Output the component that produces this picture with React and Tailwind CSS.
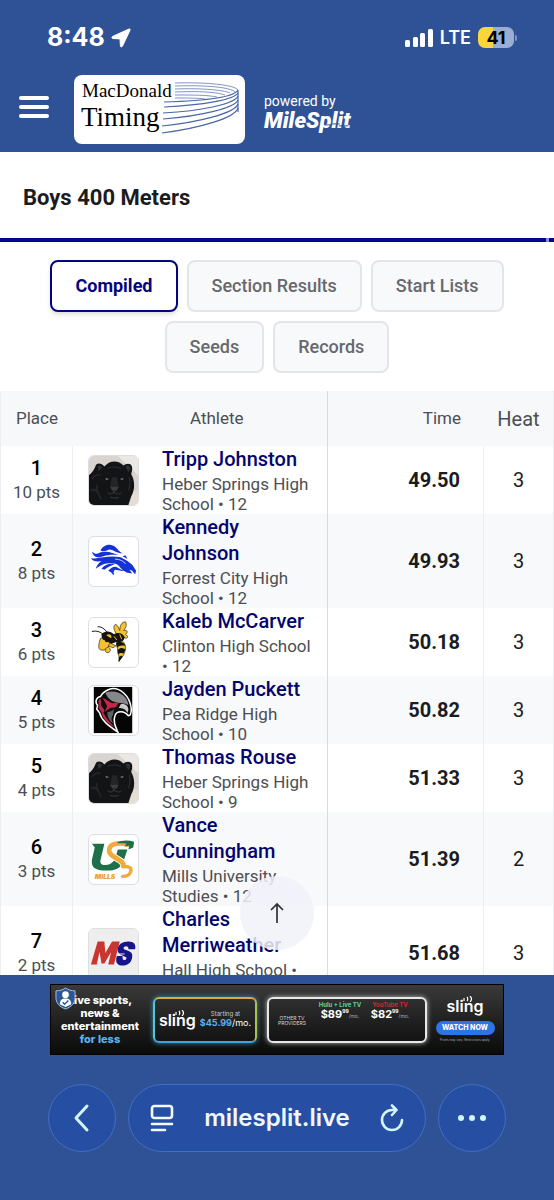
import React, { useState } from 'react';

const Panther = () => (
    <svg viewBox="0 0 51 51" className="w-full h-full">
        <rect width="51" height="51" fill="#d9d4cf" />
        <path d="M30 0h21v20l-8-8z" fill="#ebe8e3" />
        <path d="M44 34l7 4v13H40z" fill="#e6ddd2" />
        <path d="M0 20C4 17 6 13 7 10c1-3 6-3 9 1 5-7 15-7 20-1 3-3 9-3 9 3 0 3-1 4-1 6 4 7 4 16 0 23l-3 9H0z" fill="#131416" />
        <path d="M9 11c1-2 4-1 5 1l-4 4zM38 11c2-2 5-1 5 2l-2 4z" fill="#2f3034" />
        <path d="M3 24c3-4 6-5 9-4M2 36c3-2 5-1 7 2M19 13c3-2 10-2 14 0M42 22c1 5 1 9-1 14M8 30c0 6 2 11 5 15" stroke="#26282b" strokeWidth="1.5" fill="none" />
        <path d="M17 23l4 1-3 1zM36 23l-4 1 3 1z" fill="#8d876f" />
        <path d="M24 22l-2 10h9l-2-10z" fill="#232527" />
        <path d="M22 32h9l-2 4h-5z" fill="#3c3d40" />
        <path d="M19 38c3 3 6 1 7-1 2 2 5 4 8 1M26 36v3M22 43c3 1 7 1 9 0" stroke="#47484c" strokeWidth=".8" fill="none" />
    </svg>
);

const Mustang = () => (
    <svg viewBox="0 0 51 51" className="w-full h-full" fill="#1432d8">
        <path d="M12 14c3-6 11-8 16-3 2 2 4 5 7 6-6 0-10-4-14-4-3 1-5 3-9 1z" />
        <path d="M3 15c3 3 6 3 9 1 8-2 13 1 19 3-7-1-11 0-16 1-5 2-10 2-12-5z" />
        <path d="M2 22c6 1 9-1 13-1 6-1 12-1 18 0l7 4 5 4 4 6-1 4-3-4-3-1 3 4-6-1c-3-2-6-4-8-7-2-2-5-3-8-3-7 0-12 3-16 6 1-3 3-6 6-8-5 1-9 0-11-3z" />
        <path d="M13 33c4-5 10-6 14-5-4 2-8 3-11 6z" />
        <path d="M20 35c4-4 7-5 10-3 3 2 6 3 9 3-5 1-10-1-12-1-2 2-1 3-1 6-2-2-3-4-6-5z" />
        <path d="M35 20l3-1 2 4z" />
        <path d="M27 23c5 0 9 2 11 5" stroke="#fff" strokeWidth=".8" fill="none" />
    </svg>
);

const Hornet = () => (
    <svg viewBox="0 0 51 51" className="w-full h-full">
        <g stroke="#2b2414" strokeWidth=".7" fill="#f2c230">
            <path d="M28 16c-2-4-3-7-1-9 2-1 4 3 5 6 0-5 2-9 6-9 2 3 0 7-2 9 4-1 5 2 2 4 3 2 3 4 0 4z" />
            <path d="M12 21c-2 6-3 11 0 12 4 2 8-2 11-6l2-8z" />
            <path d="M17 32c0 3 0 4 3 4 3-1 3-4 0-6zM22 26l6 3-3 2-5-2z" />
            <path d="M29 23c5-2 9 3 9 8s-3 10-7 14c1-4 0-6-1-9z" />
        </g>
        <path d="M13 17c4-5 10-3 13 0 4-3 10-1 11 3 0 4-5 6-9 5-3 2-6 2-8 0-4 1-7-3-7-8z" fill="#17140f" />
        <path d="M13 23c3-1 4 0 4 3l-4 2zM20 17c3 0 4 2 3 4l-5-3z" fill="#f2c230" />
        <path d="M28 26c4-3 9 0 10 3-4-1-7 0-9 2zM30 33c3-3 6-2 8 0l-2 4c-2-1-4-1-6 1zM31 41c2-2 3-2 4-1l-4 6z" fill="#17140f" />
        <path d="M3 14c5-1 8 0 12 3M9 9c4 0 7 2 10 6" stroke="#17140f" strokeWidth="1" fill="none" />
        <path d="M26 19l3 4M32 17l2 5" stroke="#f2c230" strokeWidth="1" />
    </svg>
);

const Hawk = () => (
    <svg viewBox="0 0 51 51" className="w-full h-full">
        <rect x="5" y="1" width="40" height="48" fill="#050505" />
        <path d="M22 3c10-2 21 7 22 21 0 4-1 7-3 7-4-5-12-6-14 0-2 5 0 10 3 17-10-7-17-12-19-20l-3-4 1-4C6 17 7 12 12 11c2-5 6-6 10-8z" fill="#0d0d0d" stroke="#fff" strokeWidth="1.600" />
        <path d="M17 7c11-4 23 2 24 13-5-3-9-1-13-3-5-1-9-5-11-10z" fill="#85888b" />
        <path d="M14 12l10 6 7-1-3 5-6 1-6 4 3-6z" fill="#c5254a" />
        <path d="M33 19c4-1 8 1 8 6l-1 3c-2-4-5-5-9-5z" fill="#c9cbcc" />
        <path d="M12 13l1 8 3 4-1 3c3 6 7 10 12 15-8-4-13-9-14-16l-3-4 1-3c-2-3-1-6 1-7z" fill="#c5254a" />
        <path d="M19 27c3 0 5-1 7-3l-1 6c-2 3-2 5 0 9-4-3-6-7-6-12z" fill="#5d6164" />
    </svg>
);

const Mills = () => (
    <svg viewBox="0 0 51 51" className="w-full h-full">
        <path d="M3 9h13l-4 17c-1 5 3 6 7 5 5-1 8-5 9-9l2-7h10l-4 12c-3 8-9 10-17 10C8 37 2 35 3 26l3-13z" fill="#1d7048" />
        <g fill="none" strokeLinecap="round">
            <path d="M41 10c-11-3-21-1-20 7 1 7 15 8 15 15" stroke="#fff" strokeWidth="7" />
            <path d="M41 10c-11-3-21-1-20 7 1 7 15 8 15 15" stroke="#f0ab38" strokeWidth="5" />
            <path d="M35 33c8-1 10 2 8 6-1 3-5 4-8 4" stroke="#f0ab38" strokeWidth="3.500" />
        </g>
        <path d="M29 8c5-3 12-3 18-1l-1 6-5 2 1-4-5 1 2-3c-4-1-7 0-10-1z" fill="#1d7048" />
        <text x="6" y="46" fontSize="7" fontWeight="900" fontStyle="italic" fontFamily="Inter, sans-serif" fill="#e8a02e">MILLS</text>
    </svg>
);

const Hall = () => (
    <svg viewBox="0 0 51 51" className="w-full h-full">
        <rect width="51" height="51" fill="#eeeeef" />
        <path d="M2 37L9 13h7l1 12 7-12h8l-6 24h-6l3-13-7 12h-3l-2-12-3 13z" fill="#c9352f" />
        <path d="M48 21h-7c1-4-5-4-5-1-1 2 10 2 9 8 0 7-5 10-10 10-6 0-8-4-6-10h6c-1 6 4 5 4 2 0-2-10-2-9-9 0-5 5-8 11-8s8 3 7 8z" fill="#16168a" />
        <path d="M29 26h8" stroke="#eeeeef" strokeWidth="1" />
    </svg>
);

const results = [
    { place: 1, pts: 10, logo: Panther, name: 'Tripp Johnston', school: 'Heber Springs High School', grade: 12, time: '49.50', heat: 3 },
    { place: 2, pts: 8, logo: Mustang, name: 'Kennedy Johnson', school: 'Forrest City High School', grade: 12, time: '49.93', heat: 3 },
    { place: 3, pts: 6, logo: Hornet, name: 'Kaleb McCarver', school: 'Clinton High School', grade: 12, time: '50.18', heat: 3 },
    { place: 4, pts: 5, logo: Hawk, name: 'Jayden Puckett', school: 'Pea Ridge High School', grade: 10, time: '50.82', heat: 3 },
    { place: 5, pts: 4, logo: Panther, name: 'Thomas Rouse', school: 'Heber Springs High School', grade: 9, time: '51.33', heat: 3 },
    { place: 6, pts: 3, logo: Mills, name: 'Vance Cunningham', school: 'Mills University Studies', grade: 12, time: '51.39', heat: 2 },
    { place: 7, pts: 2, logo: Hall, name: 'Charles Merriweather', school: 'Hall High School', grade: 12, time: '51.68', heat: 3 },
];

const tabs = ['Compiled', 'Section Results', 'Start Lists', 'Seeds', 'Records'];

const StatusBar = () => (
    <div className="flex items-center justify-between h-[75px] pl-[47px] pr-[37px] font-['Inter',sans-serif] font-bold">
        <div className="flex items-center gap-[6px]">
            <span className="text-[25px]">8:48</span>
            <svg viewBox="0 0 20 20" className="w-5 h-5" fill="#fff" stroke="#fff" strokeWidth="1" strokeLinejoin="round">
                <path d="M18 1L1.500 8.500c-1 .6-.8 1.800.4 2l7.100.4.4 7c.1 1.200 1.400 1.300 2 .4L19 2.200C19.400 1.300 18.800.700 18 1z" />
            </svg>
        </div>
        <div className="flex items-center gap-[7px]">
            <svg viewBox="0 0 28 20" className="w-7 h-5" fill="#fff">
                <rect x="0" y="12" width="5" height="7" rx="1.500" />
                <rect x="8" y="9" width="5" height="10" rx="1.500" />
                <rect x="15" y="5" width="5" height="14" rx="1.500" />
                <rect x="23" y="1" width="5" height="18" rx="1.500" />
            </svg>
            <span className="text-lg font-semibold">LTE</span>
            <div className="flex items-center gap-px">
                <span className="flex items-center justify-center w-9 h-[21px] rounded-[7px] bg-linear-to-r from-[#fbd53e] from-41% to-[#9badd2] to-41% text-lg text-black">41</span>
                <span className="w-[2px] h-[6px] rounded-r bg-[#8097c4]" />
            </div>
        </div>
    </div>
);

const TimingLogo = () => (
    <a href="#home" aria-label="MacDonald Timing" className="relative block w-[171px] h-[69px] rounded-lg bg-white text-black font-['Liberation_Serif',serif]">
        <svg viewBox="0 0 171 69" className="absolute inset-0 w-full h-full" fill="none" stroke="#4a67a8">
            <g strokeWidth=".7">
                <path d="M101 8c32-1 60 2 63 7" />
                <path d="M101 11c30-1 55 1 60 6" />
                <path d="M101 14c27-1 48 1 55 4" />
                <path d="M101 17c24-1 42 0 50 3" />
                <path d="M101 20c20 0 32 0 42 2" />
                <path d="M101 23c14 0 22 0 30 1" />
            </g>
            <g strokeWidth="1.200">
                <path d="M90 27c35-1 70-4 74-12v22" />
                <path d="M90 32c38-2 70-7 74-14" />
                <path d="M89 38c38-2 72-9 75-17" />
                <path d="M89 44c38-3 72-11 75-19" />
                <path d="M88 51c38-4 73-13 76-22" />
                <path d="M88 58c38-5 73-15 76-25" />
            </g>
        </svg>
        <span className="relative block pl-2 pt-[6px] text-[19px] leading-5">MacDonald</span>
        <span className="relative block pl-[7px] text-[27px] leading-8">Timing</span>
    </a>
);

const SiteHeader = () => (
    <div className="flex items-start h-[77px] pl-[19px]">
        <button type="button" aria-label="Menu" className="flex flex-col gap-[5px] w-[30px] mt-[21px]">
            <span className="w-full h-1 rounded-full bg-white" />
            <span className="w-full h-1 rounded-full bg-white" />
            <span className="w-full h-1 rounded-full bg-white" />
        </button>
        <div className="ml-[25px]"><TimingLogo /></div>
        <div className="ml-[19px] mt-[18px]">
            <p className="text-sm leading-4">powered by</p>
            <p className="relative w-fit text-[22px] leading-6 font-black italic">
                MileSplit
                <svg viewBox="0 0 89 24" className="absolute inset-0 w-full h-full" stroke="#2f5297" strokeWidth="1">
                    <path d="M62 16h8M70 15h8M77 17h10" />
                </svg>
            </p>
        </div>
    </div>
);

const ResultRow = ({ row }) => {
    const Logo = row.logo;
    return (
        <tr className="even:bg-[#f8f9fb]">
            <td className="p-0 text-center border-r border-[#eceef1]">
                <p className="text-xl leading-6 font-medium text-black">{row.place}</p>
                <p className="text-[17px] leading-6 text-[#4c4e53]">{`${row.pts} pts`}</p>
            </td>
            <td className="p-0">
                <div className="w-[51px] h-[51px] mx-auto rounded-md border border-[#dcdee2] bg-white overflow-hidden"><Logo /></div>
            </td>
            <td className="p-0 pl-2 pr-3 border-r border-[#d8dadf]">
                <a href={`#athlete-${row.place}`} className="block text-xl leading-[26px] font-medium text-[#04046e]">{row.name}</a>
                <p className="mt-[2px] text-[17px] leading-5 text-[#4c4e53]">{`${row.school} • ${row.grade}`}</p>
            </td>
            <td className="p-0 pr-[23px] text-right text-xl font-bold border-r border-[#eceef1]">{row.time}</td>
            <td className="p-0 text-center text-xl">{row.heat}</td>
        </tr>
    );
};

const SlingLogo = () => (
    <span className="relative text-base leading-5 font-semibold">
        sling
        <svg viewBox="0 0 12 6" className="absolute left-4 top-0 w-3 h-[6px]" fill="none" stroke="#fff" strokeWidth="1.200">
            <path d="M1 2v3M4 1c1 1 1 3 0 4M7 0c2 2 2 4 0 6" />
        </svg>
    </span>
);

const ProviderPrice = ({ name, price, className }) => (
    <div className="w-[50px] mt-[3px] text-center">
        <p className={`text-[6px] leading-[6px] font-bold whitespace-nowrap ${className}`}>{name}</p>
        <p className="flex justify-center text-[11px] leading-3 font-bold">
            {price}
            <span className="text-[5px] leading-[7px]">99</span>
            <span className="self-end text-[5px] leading-[7px] font-normal text-[#a8a8a8]">/mo.</span>
        </p>
    </div>
);

const AdBanner = () => (
    <div className="relative flex items-center w-[454px] h-[71px] border border-black bg-linear-to-b from-[#3a3a3b] to-[#0b0b0b] text-white font-['Inter',sans-serif]">
        <div className="w-[98px] text-center text-[11px] leading-[13px] font-extrabold">
            <p>Live sports,</p>
            <p>news &amp;</p>
            <p>entertainment</p>
            <p className="text-[#56b4f3]">for less</p>
        </div>
        <svg viewBox="0 0 22 24" className="absolute left-1 top-[2px] w-[21px] h-[23px]">
            <path d="M11 1c3 2 6 3 10 3v7c0 6-4 10-10 12C5 21 1 17 1 11V4c4 0 7-1 10-3z" fill="#2b5795" stroke="#a9c3e4" strokeWidth="1" />
            <circle cx="11" cy="8" r="3.500" fill="#fff" />
            <path d="M5 18c0-4 2-6 6-6s6 2 6 6l-6 3z" fill="#fff" />
            <path d="M8 16l2 2 4-4" stroke="#2b5795" strokeWidth="1.500" fill="none" />
        </svg>
        <div className="flex items-center justify-center gap-1 w-[104px] h-[46px] ml-[4px] rounded-md border-2 border-t-[#d9ad45] border-r-[#aebd58] border-b-[#44a3dc] border-l-[#51c5dc] shadow-[0_0_5px_#3d8fae]">
            <SlingLogo />
            <div>
                <p className="text-[6px] leading-[6px] text-center text-[#c9c9c9]">Starting at</p>
                <p className="text-[9px] leading-[11px] whitespace-nowrap"><b className="text-[#56b4f3]">$45.99</b>/mo.</p>
            </div>
        </div>
        <div className="flex items-start w-[160px] h-[46px] ml-[10px] rounded-md border-2 border-[#e8e8e8] shadow-[0_0_5px_#bdbdbd]">
            <p className="w-[46px] mt-[17px] text-center text-[5px] leading-[5px] text-[#d9d9d9]">OTHER TV PROVIDERS</p>
            <ProviderPrice name="Hulu + Live TV" price="$89" className="text-[#5bd49a]" />
            <ProviderPrice name="YouTube TV" price="$82" className="text-[#c62d2b]" />
        </div>
        <div className="flex-1 flex flex-col items-center">
            <SlingLogo />
            <button type="button" className="w-[59px] h-[14px] mt-[5px] rounded-full bg-[#2f74e4] text-[7px] leading-[14px] font-extrabold">WATCH NOW</button>
            <p className="mt-[3px] text-[3px] leading-[5px] whitespace-nowrap text-[#a8a8a8]">Prices may vary. Restrictions apply.</p>
        </div>
    </div>
);

const BrowserBar = () => (
    <div className="flex justify-center gap-3 mt-[29px] font-['Inter',sans-serif]">
        <button type="button" aria-label="Back" className="flex items-center justify-center w-[68px] h-[68px] rounded-full border border-[#3f70bd] bg-[#264fa3]">
            <svg viewBox="0 0 18 30" className="w-[18px] h-[30px]" fill="none" stroke="#d3f5ff" strokeWidth="3" strokeLinecap="round" strokeLinejoin="round">
                <path d="M14 3L3 15l11 12" />
            </svg>
        </button>
        <div className="flex items-center justify-between w-[298px] h-[68px] px-[21px] rounded-full border border-[#3f70bd] bg-[#264fa3]">
            <button type="button" aria-label="Page menu">
                <svg viewBox="0 0 24 28" className="w-6 h-7" fill="none" stroke="#f1fbff" strokeWidth="2.600" strokeLinecap="round">
                    <rect x="2" y="2" width="20" height="12" rx="2.500" />
                    <path d="M2 20h20M2 26h13" />
                </svg>
            </button>
            <span className="text-2xl font-semibold text-[#f1f7ff]">milesplit.live</span>
            <button type="button" aria-label="Reload">
                <svg viewBox="0 0 24 28" className="w-6 h-7" fill="none" stroke="#d3f5ff" strokeWidth="2.600" strokeLinecap="round" strokeLinejoin="round">
                    <path d="M22 16a10 10 0 1 1-10-10h4M12 1.500l4.500 4.500-4.500 5" />
                </svg>
            </button>
        </div>
        <button type="button" aria-label="More" className="flex items-center justify-center gap-[5px] w-[68px] h-[68px] rounded-full border border-[#3f70bd] bg-[#264fa3]">
            <span className="w-[6px] h-[6px] rounded-full bg-[#d3f5ff]" />
            <span className="w-[6px] h-[6px] rounded-full bg-[#d3f5ff]" />
            <span className="w-[6px] h-[6px] rounded-full bg-[#d3f5ff]" />
        </button>
    </div>
);

const App = () => {
    const [active, setActive] = useState('Compiled');

    return (
        <div className="flex flex-col h-screen bg-white text-[#1b1c1f] font-['Roboto',sans-serif]">
            <header className="shrink-0 bg-[#2f5297] text-white">
                <StatusBar />
                <SiteHeader />
            </header>

            <main className="relative flex-1 min-h-0 overflow-hidden">
                <h1 className="h-[86px] pl-[23px] pt-[30px] text-[22px] leading-8 font-bold">Boys 400 Meters</h1>
                <div className="flex justify-end h-1 pr-[5px] bg-[#04048c]">
                    <span className="w-[3px] bg-[#8d8dd0]" />
                </div>

                <div className="flex flex-wrap justify-center gap-[9px] px-4 pt-[18px] pb-[18px]">
                    {tabs.map((tab) => (
                        <button
                            key={tab}
                            type="button"
                            onClick={() => setActive(tab)}
                            className={`h-[52px] px-[23px] rounded-lg border-2 text-lg ${
                                active === tab
                                    ? 'border-[#04047c] bg-white text-[#04047c] font-bold shadow-md'
                                    : 'border-[#e3e5e8] bg-[#f8f9fb] text-[#66686c] font-medium'
                            }`}
                        >
                            {tab}
                        </button>
                    ))}
                </div>

                <table className="w-full table-fixed border-separate border-spacing-0 border-x border-[#eceef1]">
                    <thead>
                        <tr className="h-[55px] bg-[#f7f8fa] text-[17px] text-[#4c4e53]">
                            <th className="w-[72px] p-0 font-normal">Place</th>
                            <th className="w-[81px] p-0" aria-label="Team" />
                            <th className="p-0 pl-9 text-left font-normal border-r border-[#d8dadf]">Athlete</th>
                            <th className="w-[156px] p-0 pr-[23px] text-right font-normal">Time</th>
                            <th className="w-[69px] p-0 text-xl font-normal">Heat</th>
                        </tr>
                    </thead>
                    <tbody>
                        {results.map((row) => <ResultRow key={row.place} row={row} />)}
                    </tbody>
                </table>

                <button type="button" aria-label="Back to top" className="absolute bottom-[25px] left-1/2 -translate-x-1/2 flex items-center justify-center w-[74px] h-[74px] rounded-full bg-[#f1f1f9]/85">
                    <svg viewBox="0 0 14 22" className="w-[14px] h-[22px]" fill="none" stroke="#303136" strokeWidth="1.700">
                        <path d="M7 21V2M1 8l6-6 6 6" />
                    </svg>
                </button>
            </main>

            <footer className="shrink-0 flex flex-col items-center h-[225px] pt-[9px] bg-[#2f5297]">
                <AdBanner />
                <BrowserBar />
            </footer>
        </div>
    );
};

export default App;
